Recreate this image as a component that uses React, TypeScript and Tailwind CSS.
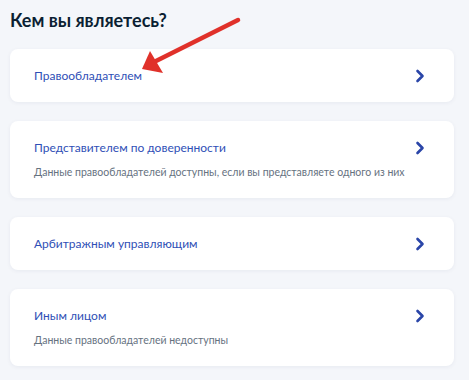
import React from 'react';

const options = [
  { title: 'Правообладателем' },
  { title: 'Представителем по доверенности', note: 'Данные правообладателей доступны, если вы представляете одного из них' },
  { title: 'Арбитражным управляющим' },
  { title: 'Иным лицом', note: 'Данные правообладателей недоступны' },
];

function Chevron() {
  return (
    <svg width="10" height="14" viewBox="0 0 10 14" className="shrink-0">
      <path d="M2.5 2 L7.5 7 L2.5 12" fill="none" stroke="#2a45a8" strokeWidth="2.6" strokeLinecap="round" strokeLinejoin="round" />
    </svg>
  );
}

function App() {
  return (
    <div className="relative min-h-screen bg-[#f4f6fa] px-[10px] pr-[15px] pt-[7px] font-['Lato','Noto_Sans',sans-serif]">
      <h1 className="text-[18px] font-bold leading-[26px] text-[#0b1f33]">Кем вы являетесь?</h1>

      <div className="mt-4 flex flex-col gap-[19px]">
        {options.map((o) => (
          <div key={o.title} className="flex items-start justify-between rounded-lg bg-white py-[18px] pl-6 pr-[29px] shadow-[0_1px_4px_rgba(16,40,80,0.06)]">
            <div className="flex flex-col gap-[9px]">
              <div className="text-[12px] leading-[17px] text-[#2f4fb6]">{o.title}</div>
              {o.note && <div className="whitespace-nowrap text-[10.5px] leading-[15px] text-[#66727f]">{o.note}</div>}
            </div>
            <div className="flex h-[17px] items-center">
              <Chevron />
            </div>
          </div>
        ))}
      </div>

      {/* red annotation arrow */}
      <svg className="pointer-events-none absolute left-0 top-0" width="469" height="380">
        <path d="M238 20 L156 61" stroke="#e0312a" strokeWidth="4.5" strokeLinecap="round" />
        <polygon points="142,69 150,51 163,73" fill="#e0312a" />
      </svg>
    </div>
  );
}

export default App;
